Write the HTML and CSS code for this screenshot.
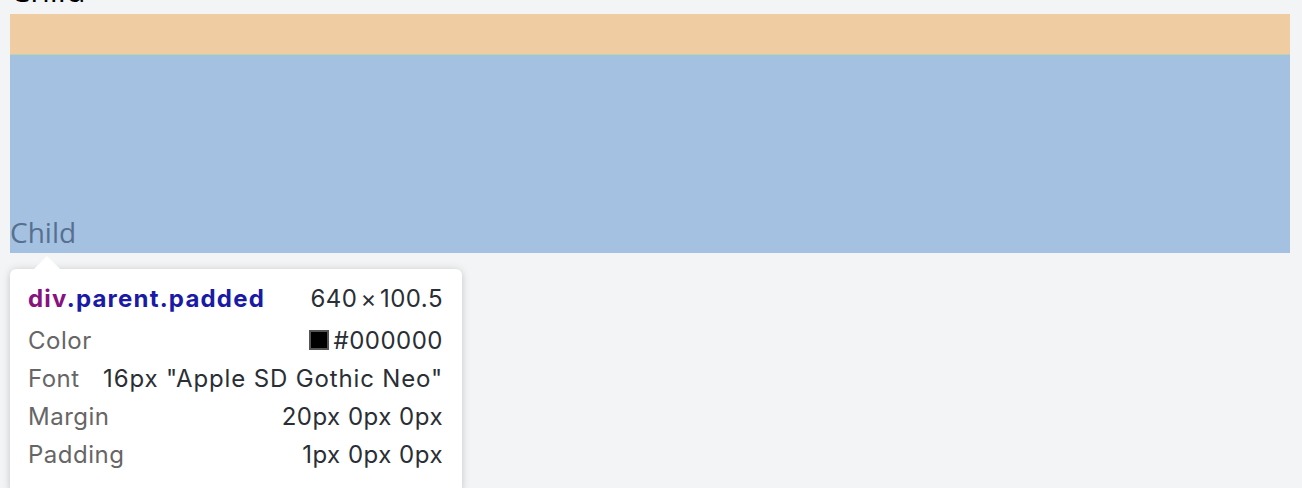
FILE: index.html
```html
<!DOCTYPE html>
<html>
<head>
<meta charset="utf-8">
<link rel="stylesheet" href="styles.css">
</head>
<body>
<div class="page">
  <div class="child-top">Child</div>
  <div class="margin-box">
    <div class="padding-box">
      <div class="content-box">
        <div class="child-bottom">Child</div>
      </div>
    </div>
  </div>
  <div class="tooltip">
    <div class="arrow"></div>
    <div class="row head">
      <span class="sel"><span class="tag">div</span><span class="cls">.parent.padded</span></span>
      <span class="dim">640<span class="times">×</span>100.5</span>
    </div>
    <div class="row">
      <span class="label">Color</span>
      <span class="value"><span class="swatch"></span>#000000</span>
    </div>
    <div class="row">
      <span class="label">Font</span>
      <span class="value font-value">16px "Apple SD Gothic Neo"</span>
    </div>
    <div class="row">
      <span class="label">Margin</span>
      <span class="value">20px 0px 0px</span>
    </div>
    <div class="row">
      <span class="label">Padding</span>
      <span class="value">1px 0px 0px</span>
    </div>
  </div>
</div>
</body>
</html>
```

FILE: styles.css
```css
html, body {
  margin: 0;
  padding: 0;
  background: #f3f4f6;
  overflow: hidden;
}
.page {
  padding: 0 12px 0 10px;
  font-family: "Open Sans", "Noto Sans", sans-serif;
}
.child-top {
  font-size: 32px;
  line-height: 32px;
  height: 40px;
  margin-top: -26px;
  color: #000;
}
.margin-box {
  background: #efcca2;
  padding-top: 40px;
}
.padding-box {
  background: #b8d8a8;
  padding-top: 1px;
}
.content-box {
  background: #a5c1e2;
  height: 198px;
  display: flex;
  align-items: flex-end;
}
.child-bottom {
  font-size: 28px;
  line-height: 42px;
  color: #56708f;
}
.tooltip {
  position: relative;
  margin-top: 16px;
  width: 452px;
  box-sizing: border-box;
  background: #fff;
  border-radius: 6px;
  box-shadow: 0 0 10px rgba(0,0,0,0.12), 0 2px 6px rgba(0,0,0,0.08);
  padding: 14px 19px 20px 18px;
  font-family: Inter, "Noto Sans", sans-serif;
  font-size: 24px;
  letter-spacing: 0.5px;
}
.arrow {
  position: absolute;
  left: 24px;
  top: -13px;
  width: 0;
  height: 0;
  border-left: 13px solid transparent;
  border-right: 13px solid transparent;
  border-bottom: 13px solid #fff;
}
.row {
  display: flex;
  justify-content: space-between;
  align-items: center;
  height: 38px;
  color: #2a2e35;
}
.row.head {
  height: 30px;
  margin-bottom: 8px;
}
.sel {
  font-weight: 700;
  letter-spacing: 1.2px;
}
.tag { color: #881280; }
.cls { color: #1a1aa6; }
.dim { color: #2a2e35; }
.times {
  margin: 0 3px;
}
.label { color: #666; }
.value {
  color: #2a2e35;
  display: flex;
  align-items: center;
}
.font-value {
  letter-spacing: 0.85px;
}
.swatch {
  display: inline-block;
  width: 16px;
  height: 16px;
  background: #000;
  border: 2px solid #555;
  margin-right: 4px;
}
```
